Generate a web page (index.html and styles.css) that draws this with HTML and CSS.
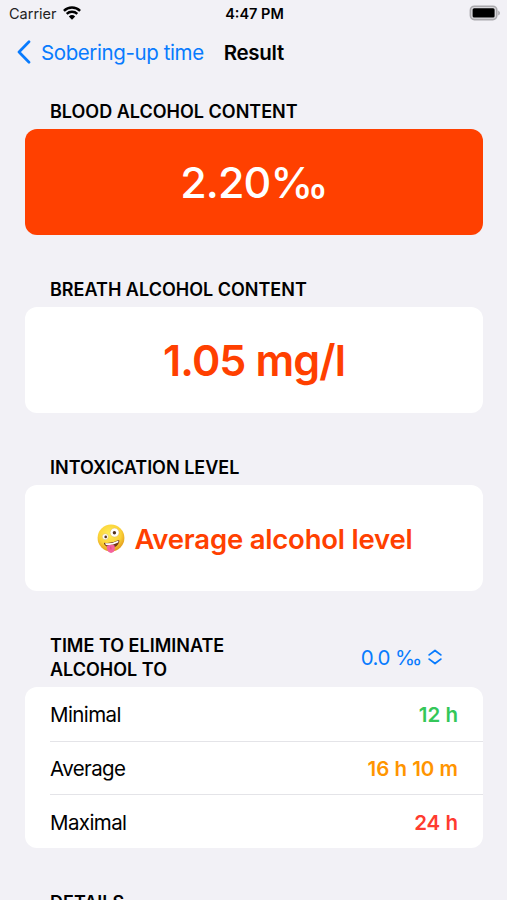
FILE: index.html
```html
<!DOCTYPE html>
<html lang="en">
<head>
  <meta charset="UTF-8">
  <title>Result</title>
  <link rel="stylesheet" href="styles.css">
</head>
<body>
  <div class="status-bar">
    <div class="carrier">
      <span class="carrier-name">Carrier</span>
      <svg class="wifi" width="18" height="14" viewBox="0 0 18 14">
        <path d="M0.9 4.9a11.5 11.5 0 0 1 16.2 0M3.7 7.9a7.6 7.6 0 0 1 10.6 0" fill="none" stroke="#000" stroke-width="2.4"/>
        <path d="M9 13.8L5.8 10.4a4.7 4.7 0 0 1 6.4 0z"/>
      </svg>
    </div>
    <span class="clock">4:47 PM</span>
    <svg class="battery" width="31" height="16" viewBox="0 0 31 16">
      <rect x="1.4" y="1.2" width="26.4" height="13.4" rx="4" fill="#d9d8dc" stroke="#aaa9ad" stroke-width="1.6"/>
      <rect x="3.6" y="3.3" width="22" height="9.2" rx="1.5"/>
      <path d="M29.2 5.4q1.8 1 1.8 2.5t-1.8 2.5z" fill="#aaa9ad"/>
    </svg>
  </div>

  <div class="nav-bar">
    <a class="back" href="#">
      <svg width="14" height="24" viewBox="0 0 14 24">
        <path d="M12 1.8L2 12l10 10.2" fill="none" stroke="#087bfe" stroke-width="2.7" stroke-linecap="round" stroke-linejoin="round"/>
      </svg>
      <span class="back-text">Sobering-up time</span>
    </a>
    <span class="title">Result</span>
  </div>

  <h2 class="blood">Blood alcohol content</h2>
  <div class="card filled">
    <span class="value permille">2.20‰</span>
  </div>

  <h2 class="breath">Breath alcohol content</h2>
  <div class="card">
    <span class="value">1.05 mg/l</span>
  </div>

  <h2 class="intoxication">Intoxication level</h2>
  <div class="card level-card">
    <svg class="emoji" width="28" height="30" viewBox="0 0 28 30">
      <defs>
        <radialGradient id="face" cx="45%" cy="35%" r="65%">
          <stop offset="0" stop-color="#ffee58"/>
          <stop offset="0.65" stop-color="#fbd238"/>
          <stop offset="1" stop-color="#e29a1c"/>
        </radialGradient>
      </defs>
      <circle cx="14" cy="14" r="13.4" fill="url(#face)"/>
      <circle cx="17.6" cy="8.6" r="4.5" fill="#fff" stroke="#d8b45c" stroke-width="0.5"/>
      <circle cx="17.4" cy="8.7" r="1.7" fill="#53321d"/>
      <circle cx="8.3" cy="12.7" r="3" fill="#fff" stroke="#d8b45c" stroke-width="0.5"/>
      <circle cx="8.7" cy="12.9" r="1.3" fill="#53321d"/>
      <path d="M7.4 18.8q7.5 1 14-2.8q1.2 0 .9 1.4q-1.6 6-7.4 6.3q-5.5.2-7.9-3.7q-.2-1 .4-1.2z" fill="#713517"/>
      <path d="M8 19.2q7.2.8 13.5-2.6l-.3 1.9q-6.2 3.2-12.3 2.5z" fill="#fff"/>
      <path d="M9.8 22q3.9-2 7.6-.8q1.2 4.2-.7 6.6q-2.7 2.3-5.3 0q-1.8-2-1.6-5.8z" fill="#f5629c"/>
      <path d="M13.7 22.5l.3 3" stroke="#d83e7c" stroke-width="0.8"/>
    </svg>
    <span class="level">Average alcohol level</span>
  </div>

  <div class="eliminate-header">
    <h2 class="eliminate">Time to eliminate<br>alcohol to</h2>
    <div class="picker">
      <span class="picker-text">0.0 ‰</span>
      <svg width="14" height="16" viewBox="0 0 14 16">
        <path d="M1.2 5.9L7 1.5l5.8 4.4M1.2 10.1L7 14.5l5.8-4.4" fill="none" stroke="#087bfe" stroke-width="1.8" stroke-linecap="round" stroke-linejoin="round"/>
      </svg>
    </div>
  </div>
  <div class="list">
    <div class="row">
      <span class="label">Minimal</span>
      <span class="time green">12 h</span>
    </div>
    <div class="row">
      <span class="label">Average</span>
      <span class="time orange">16 h 10 m</span>
    </div>
    <div class="row">
      <span class="label">Maximal</span>
      <span class="time red">24 h</span>
    </div>
  </div>

  <h2 class="details">Details</h2>
</body>
</html>
```

FILE: styles.css
```css
* {
  box-sizing: border-box;
}
body {
  margin: 0;
  height: 900px;
  overflow: hidden;
  background-color: #f2f1f6;
  color: #000;
  font-family: Inter, "Liberation Sans", sans-serif;
}
svg {
  display: block;
  flex: none;
}
span {
  white-space: nowrap;
}
.status-bar {
  display: grid;
  grid-template-columns: 1fr auto 1fr;
  align-items: center;
  height: 27px;
  padding: 0 7px 0 9px;
  font-size: 14.5px;
}
.carrier {
  display: flex;
  align-items: center;
  gap: 6px;
  color: #222;
}
.wifi {
  margin-top: -1px;
}
.clock {
  font-weight: 600;
}
.battery {
  justify-self: end;
  margin-top: -1px;
}
.nav-bar {
  display: flex;
  align-items: center;
  height: 50px;
  padding-left: 17px;
  font-size: 20.5px;
}
.back {
  display: flex;
  align-items: center;
  gap: 10px;
  color: #087bfe;
  text-decoration: none;
}
.back-text {
  letter-spacing: -0.4px;
}
.title {
  margin-left: 20px;
  font-weight: 600;
  letter-spacing: -0.3px;
}
h2 {
  margin: 0;
  padding-left: 50px;
  font-size: 18px;
  font-weight: 600;
  line-height: 24px;
  text-transform: uppercase;
}
.blood {
  margin-top: 23px;
}
.breath,
.intoxication {
  margin-top: 43px;
}
.card {
  display: flex;
  align-items: center;
  justify-content: center;
  height: 106px;
  margin: 5px 24px 0 25px;
  border-radius: 12px;
  background-color: #fff;
  color: #ff4000;
}
.card.filled {
  background-color: #ff4000;
  color: #fff;
}
.level-card {
  padding-left: 2px;
}
.value {
  font-size: 43px;
  font-weight: 600;
  letter-spacing: -0.9px;
}
.value.permille {
  font-weight: 500;
}
.emoji {
  margin-top: 2px;
  margin-right: 9px;
}
.level {
  padding-top: 2px;
  font-size: 27.5px;
  font-weight: 600;
  letter-spacing: -0.2px;
}
.eliminate-header {
  display: flex;
  align-items: center;
  justify-content: space-between;
  margin-top: 43px;
  padding-right: 65px;
}
.picker {
  display: flex;
  align-items: center;
  gap: 6px;
  padding-bottom: 2px;
  color: #087bfe;
  font-size: 20.5px;
}
.picker-text {
  letter-spacing: -0.5px;
}
.list {
  margin: 5px 24px 0 25px;
  border-radius: 12px;
  background-color: #fff;
}
.row {
  display: flex;
  align-items: center;
  justify-content: space-between;
  height: 53.7px;
  margin-left: 25px;
  padding-top: 1px;
  padding-right: 25px;
  font-size: 20.5px;
}
.row + .row {
  border-top: 1px solid #e4e4e8;
}
.label {
  letter-spacing: -0.6px;
}
.time {
  font-weight: 600;
}
.green {
  color: #34c759;
}
.orange {
  color: #ff9500;
}
.red {
  color: #ff3b30;
}
.details {
  margin-top: 43px;
}
```
